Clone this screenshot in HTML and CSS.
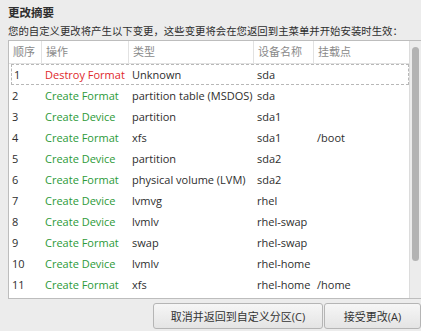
FILE: index.html
```html
<!DOCTYPE html>
<html lang="zh">
  <head>
    <title>更改摘要</title>
    <link rel="stylesheet" href="styles.css">
  </head>
  <body>
    <div class="dialog">
      <div class="title">更改摘要</div>
      <div class="desc">您的自定义更改将产生以下变更，这些变更将会在您返回到主菜单并开始安装时生效：</div>
      <div class="table">
        <div class="list">
          <div class="row head">
            <div>顺序</div><div>操作</div><div>类型</div><div>设备名称</div><div>挂载点</div>
          </div>
          <div class="row sel">
            <div>1</div><div class="red">Destroy Format</div><div>Unknown</div><div>sda</div><div></div>
          </div>
          <div class="row">
            <div>2</div><div class="green">Create Format</div><div>partition table (MSDOS)</div><div>sda</div><div></div>
          </div>
          <div class="row">
            <div>3</div><div class="green">Create Device</div><div>partition</div><div>sda1</div><div></div>
          </div>
          <div class="row">
            <div>4</div><div class="green">Create Format</div><div>xfs</div><div>sda1</div><div>/boot</div>
          </div>
          <div class="row">
            <div>5</div><div class="green">Create Device</div><div>partition</div><div>sda2</div><div></div>
          </div>
          <div class="row">
            <div>6</div><div class="green">Create Format</div><div>physical volume (LVM)</div><div>sda2</div><div></div>
          </div>
          <div class="row">
            <div>7</div><div class="green">Create Device</div><div>lvmvg</div><div>rhel</div><div></div>
          </div>
          <div class="row">
            <div>8</div><div class="green">Create Device</div><div>lvmlv</div><div>rhel-swap</div><div></div>
          </div>
          <div class="row">
            <div>9</div><div class="green">Create Format</div><div>swap</div><div>rhel-swap</div><div></div>
          </div>
          <div class="row">
            <div>10</div><div class="green">Create Device</div><div>lvmlv</div><div>rhel-home</div><div></div>
          </div>
          <div class="row">
            <div>11</div><div class="green">Create Format</div><div>xfs</div><div>rhel-home</div><div>/home</div>
          </div>
        </div>
        <div class="scroll"><div class="thumb"></div></div>
      </div>
      <div class="buttons">
        <button class="btn cancel">取消并返回到自定义分区(C)</button>
        <button class="btn accept">接受更改(A)</button>
      </div>
    </div>
  </body>
</html>
```

FILE: styles.css
```css
html, body {
  margin: 0;
  background: #ececec;
}

.dialog {
  width: 421px;
  height: 331px;
  overflow: hidden;
  font-family: "Open Sans", "Noto Sans CJK SC", sans-serif;
  font-size: 11px;
  color: #2e2e2e;
}

.title {
  margin: 4px 0 0 8px;
  height: 18px;
  font-weight: bold;
  font-size: 11.5px;
  line-height: 18px;
}

.desc {
  margin: 1px 0 0 8px;
  height: 17px;
  font-size: 10.4px;
  line-height: 17px;
  white-space: nowrap;
}

.table {
  display: flex;
  margin-left: 8px;
  width: 420px;
  height: 257px;
  background: #fff;
  border: 1px solid #bdbdbd;
  overflow: hidden;
}

.list {
  width: 400px;
}

.row {
  display: grid;
  grid-template-columns: 33px 87px 125px 60px 1fr;
  height: 21px;
  line-height: 21px;
  white-space: nowrap;
}

.row > div {
  padding-left: 3px;
  overflow: hidden;
}

.head {
  height: 23px;
  line-height: 22px;
  color: #8a8a8a;
}

.head > div {
  padding-left: 4px;
  border-right: 1px solid #e2e2e2;
  border-bottom: 1px solid #e2e2e2;
}

.head > div:last-child {
  border-right: none;
}

.sel {
  margin-left: 2px;
  outline: 1px dashed #b8b8b8;
  outline-offset: -1px;
  grid-template-columns: 31px 87px 125px 60px 1fr;
}

.red {
  color: #e0282b;
}

.green {
  color: #2c9a38;
}

.scroll {
  width: 12px;
  background: #ececec;
  border-left: 1px solid #dcdcdc;
  padding-top: 6px;
}

.thumb {
  margin-left: 2px;
  width: 7px;
  height: 214px;
  background: #b3b3b3;
  border-radius: 4px;
}

.buttons {
  display: flex;
  margin: 4px 0 0 153px;
}

.btn {
  height: 26px;
  padding: 0;
  font-family: "Open Sans", "Noto Sans CJK SC", sans-serif;
  font-size: 11px;
  color: #333;
  background: linear-gradient(#f6f6f6, #e4e4e4);
  border: 1px solid #b5b5b5;
  border-radius: 3px;
}

.cancel {
  width: 175px;
}

.accept {
  width: 100px;
  margin-left: 1px;
}
```
